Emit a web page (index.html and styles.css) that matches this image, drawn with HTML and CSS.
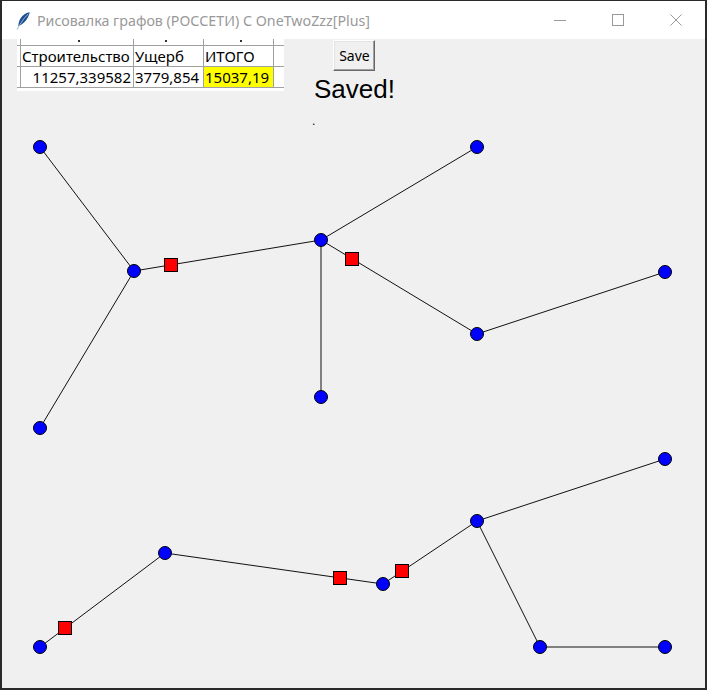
FILE: index.html
```html
<!DOCTYPE html>
<html lang="ru">
<head>
<meta charset="utf-8">
<title>Рисовалка графов</title>
<link rel="stylesheet" href="styles.css">
</head>
<body>
<div class="window">
  <div class="titlebar">
    <svg class="app-icon" width="14" height="18" viewBox="0 0 14 18">
      <path d="M13.5 0.3 C8 1.3 3.8 5.5 2.6 11.5 L2.2 14.2 C5.5 13.2 9.8 9.6 11.8 5.5 C13.1 3 13.7 1.4 13.5 0.3Z" fill="#1d4f8f"/>
      <path d="M12.3 2 C8.5 5.5 5.5 9.5 1 17.5" stroke="#9bbbe0" stroke-width="1" fill="none"/>
    </svg>
    <span class="title">Рисовалка графов (РОССЕТИ) С OneTwoZzz[Plus]</span>
    <div class="controls">
      <div class="ctl"><svg width="12" height="12" viewBox="0 0 12 12"><path d="M0 6.5 H12" stroke="#999" stroke-width="1"/></svg></div>
      <div class="ctl"><svg width="12" height="12" viewBox="0 0 12 12"><rect x="0.5" y="0.5" width="11" height="11" fill="none" stroke="#999" stroke-width="1"/></svg></div>
      <div class="ctl"><svg width="12" height="12" viewBox="0 0 12 12"><path d="M0.5 0.5 L11.5 11.5 M11.5 0.5 L0.5 11.5" stroke="#999" stroke-width="1"/></svg></div>
    </div>
  </div>
  <div class="content">
    <div class="top">
      <div class="table">
        <div class="row partial">
          <div class="cell c1"><span class="tick t1"></span></div>
          <div class="cell c2"><span class="tick t2"></span></div>
          <div class="cell c3"><span class="tick t3"></span></div>
        </div>
        <div class="row">
          <div class="cell c1">Строительство</div>
          <div class="cell c2">Ущерб</div>
          <div class="cell c3">ИТОГО</div>
        </div>
        <div class="row">
          <div class="cell c1 num">11257,339582</div>
          <div class="cell c2">3779,854</div>
          <div class="cell c3 total">15037,19</div>
        </div>
      </div>
      <div class="side">
        <button class="save">Save</button>
        <div class="saved">Saved!</div>
        <div class="dot">.</div>
      </div>
    </div>
    <svg class="canvas" viewBox="2 130 703 558" width="703" height="558">
      <g stroke="#111" stroke-width="1" fill="none">
        <line x1="40" y1="147" x2="134" y2="271"/>
        <line x1="40" y1="428" x2="134" y2="271"/>
        <line x1="134" y1="271" x2="321" y2="240"/>
        <line x1="321" y1="240" x2="477" y2="147"/>
        <line x1="321" y1="240" x2="321" y2="397"/>
        <line x1="321" y1="240" x2="477" y2="334"/>
        <line x1="477" y1="334" x2="665" y2="272"/>
        <line x1="40" y1="647" x2="165" y2="553"/>
        <line x1="165" y1="553" x2="383" y2="584"/>
        <line x1="383" y1="584" x2="477" y2="521"/>
        <line x1="477" y1="521" x2="665" y2="459"/>
        <line x1="477" y1="521" x2="540" y2="647"/>
        <line x1="540" y1="647" x2="665" y2="647"/>
      </g>
      <g fill="#ff0000" stroke="#000" stroke-width="1">
        <rect x="164.5" y="258.5" width="13" height="13"/>
        <rect x="345.5" y="252.5" width="13" height="13"/>
        <rect x="333.5" y="571.5" width="13" height="13"/>
        <rect x="395.5" y="564.5" width="13" height="13"/>
        <rect x="58.5" y="621.5" width="13" height="13"/>
      </g>
      <g fill="#0000ff" stroke="#000" stroke-width="1">
        <circle cx="40" cy="147" r="6.5"/>
        <circle cx="477" cy="147" r="6.5"/>
        <circle cx="321" cy="240" r="6.5"/>
        <circle cx="134" cy="271" r="6.5"/>
        <circle cx="665" cy="272" r="6.5"/>
        <circle cx="477" cy="334" r="6.5"/>
        <circle cx="321" cy="397" r="6.5"/>
        <circle cx="40" cy="428" r="6.5"/>
        <circle cx="665" cy="459" r="6.5"/>
        <circle cx="477" cy="521" r="6.5"/>
        <circle cx="165" cy="553" r="6.5"/>
        <circle cx="383" cy="584" r="6.5"/>
        <circle cx="40" cy="647" r="6.5"/>
        <circle cx="540" cy="647" r="6.5"/>
        <circle cx="665" cy="647" r="6.5"/>
      </g>
    </svg>
  </div>
</div>
</body>
</html>
```
FILE: styles.css
```css
html, body {
  margin: 0;
  padding: 0;
}
body {
  width: 707px;
  height: 690px;
  overflow: hidden;
  background: #2a2a2a;
  font-family: "Noto Sans", "Open Sans", sans-serif;
}
.window {
  margin: 1px 2px 0 2px;
  width: 703px;
  height: 687px;
  display: flex;
  flex-direction: column;
  background: #f0f0f0;
}
.titlebar {
  height: 38px;
  flex: none;
  background: #ffffff;
  display: flex;
  align-items: center;
}
.app-icon {
  margin-left: 14px;
  margin-top: 1px;
  flex: none;
}
.title {
  margin-left: 7px;
  font-size: 14.25px;
  color: #999999;
  white-space: nowrap;
}
.controls {
  margin-left: auto;
  display: flex;
  height: 100%;
}
.ctl {
  width: 58px;
  height: 38px;
  display: flex;
  align-items: center;
  justify-content: center;
}
.content {
  flex: 1;
  display: flex;
  flex-direction: column;
  background: #f0f0f0;
}
.top {
  height: 91px;
  flex: none;
  display: flex;
}
.table {
  margin-left: 15px;
  width: 267px;
  height: 52px;
  background: #ffffff;
  overflow: hidden;
  font-size: 15px;
  color: #000;
}
.row {
  display: flex;
  height: 20px;
  border-bottom: 1px solid #a0a0a0;
  padding-left: 3px;
}
.row.partial {
  height: 6px;
}
.cell {
  height: 100%;
  border-left: 1px solid #a0a0a0;
  line-height: 20px;
  padding-left: 1px;
  white-space: nowrap;
  overflow: hidden;
  box-sizing: border-box;
  position: relative;
}
.c1 { width: 113px; }
.c2 { width: 70px; }
.c3 { width: 71px; border-right: 1px solid #a0a0a0; }
.num {
  text-align: right;
  padding-right: 2px;
}
.total {
  background: #ffff00;
}
.tick {
  position: absolute;
  top: 1px;
  width: 2px;
  height: 2px;
  background: #333;
}
.t1 { left: 57px; }
.t2 { left: 31px; }
.t3 { left: 36px; }
.side {
  margin-left: 30px;
  display: flex;
  flex-direction: column;
  align-items: center;
}
.save {
  margin-top: 1px;
  width: 42px;
  height: 31px;
  padding: 0;
  font-family: "Noto Sans", "Open Sans", sans-serif;
  font-size: 14px;
  color: #000;
  background: #f0f0f0;
  border: none;
  border-top: 1px solid #ffffff;
  border-left: 1px solid #ffffff;
  border-right: 1px solid #696969;
  border-bottom: 1px solid #696969;
  box-shadow: inset -1px -1px 0 #a0a0a0, inset 1px 1px 0 #e3e3e3;
}
.saved {
  margin-top: 3px;
  font-family: "Liberation Sans", Arial, sans-serif;
  font-size: 26px;
  line-height: 30px;
  color: #000;
}
.dot {
  align-self: flex-start;
  margin-left: -2px;
  font-family: "Liberation Sans", Arial, sans-serif;
  font-size: 12px;
  line-height: 14px;
  margin-top: 10px;
}
.canvas {
  display: block;
  flex: none;
}
```
